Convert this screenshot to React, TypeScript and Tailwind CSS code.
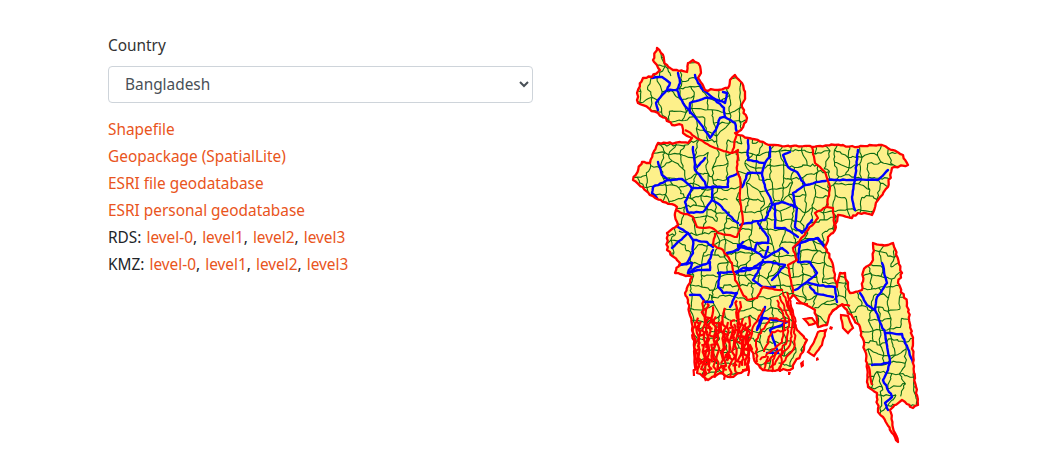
type Pt = [number, number];

function rnd(seed: number) {
  const s = Math.sin(seed * 127.1 + 311.7) * 43758.5453;
  return s - Math.floor(s);
}

// breaks each segment into short crooked pieces, boundaries are never straight
function crooked(pts: Pt[], amp: number, step: number, seed: number, close = false) {
  const list = close ? [...pts, pts[0]] : pts;
  let d = `M${list[0][0]} ${list[0][1]}`;
  let n = seed;
  for (let i = 1; i < list.length; i++) {
    const [ax, ay] = list[i - 1];
    const [bx, by] = list[i];
    const parts = Math.max(1, Math.round(Math.hypot(bx - ax, by - ay) / step));
    for (let k = 1; k <= parts; k++) {
      const t = k / parts;
      const last = k === parts;
      const jx = last ? 0 : (rnd(n++) - 0.5) * amp * 2;
      const jy = last ? 0 : (rnd(n++) - 0.5) * amp * 2;
      d += `L${(ax + (bx - ax) * t + jx).toFixed(1)} ${(ay + (by - ay) * t + jy).toFixed(1)}`;
    }
  }
  return close ? d + "Z" : d;
}

const outline: Pt[] = [
  [657, 48], [661, 53], [664, 60], [667, 65], [673, 70], [687, 72], [688, 63], [693, 60], [700, 66], [701, 73],
  [698, 78], [705, 90], [718, 90], [728, 88], [730, 80], [735, 75], [742, 83], [745, 95], [742, 107], [747, 118],
  [741, 130], [735, 133], [748, 138], [772, 145], [812, 147], [835, 145], [858, 147], [882, 145], [903, 155],
  [908, 165], [892, 168], [888, 187], [878, 200], [872, 215], [858, 213], [852, 218], [838, 215], [835, 230],
  [828, 237], [825, 247], [833, 265], [837, 287], [840, 273], [845, 273], [850, 293], [862, 290], [863, 272],
  [873, 260], [873, 243], [882, 245], [893, 243], [902, 273], [898, 283], [907, 303], [913, 343], [913, 363],
  [918, 405], [913, 408], [902, 400], [890, 410], [893, 428], [898, 442], [892, 433], [883, 417], [878, 412],
  [877, 393], [868, 387], [867, 363], [860, 327], [847, 310], [842, 305], [833, 310], [827, 325], [818, 327],
  [815, 310], [810, 307], [800, 302], [793, 295], [788, 302], [797, 330], [807, 340], [803, 352], [790, 370],
  [763, 370], [756, 363], [750, 345], [747, 370], [730, 377], [720, 373], [708, 380], [697, 373], [695, 353],
  [692, 330], [688, 300], [685, 293], [692, 277], [675, 273], [680, 263], [667, 250], [667, 233], [678, 225],
  [675, 213], [677, 207], [655, 198], [633, 180], [642, 162], [650, 163], [658, 143], [688, 143], [692, 138],
  [683, 133], [682, 125], [672, 125], [658, 113], [638, 103], [637, 93], [643, 78], [652, 77], [660, 70], [653, 60],
];

const islands: Pt[][] = [
  [[826, 330], [822, 345], [814, 356], [808, 352], [814, 342], [818, 332]],
  [[841, 315], [848, 316], [853, 328], [848, 333], [843, 328]],
  [[804, 319], [812, 318], [816, 323], [809, 325]],
];

const specks: Pt[][] = [
  [[830, 326], [833, 327], [832, 330], [829, 329]],
  [[800, 363], [804, 360], [804, 366], [801, 368]],
  [[788, 372], [791, 372], [790, 375], [788, 375]],
  [[816, 358], [818, 357], [819, 360], [816, 361]],
];

const blue: Pt[][] = [
  [[652, 78], [662, 77], [670, 83], [667, 90], [658, 100], [656, 103], [658, 110]],
  [[667, 90], [677, 90], [680, 83], [678, 73]],
  [[677, 90], [683, 103], [695, 117], [703, 127], [710, 138], [717, 127], [720, 118], [725, 117], [735, 123], [737, 132]],
  [[690, 113], [690, 103], [705, 98], [713, 98], [724, 108], [725, 117]],
  [[695, 75], [698, 83], [703, 90], [713, 98], [725, 103], [727, 93], [723, 92]],
  [[658, 162], [662, 175], [668, 180], [682, 179], [692, 188], [707, 187], [717, 187], [728, 187], [728, 178], [738, 173]],
  [[693, 147], [695, 170], [705, 182], [707, 187]],
  [[705, 158], [697, 167]],
  [[668, 180], [653, 187], [652, 193], [657, 198]],
  [[692, 188], [685, 202], [688, 213], [703, 212], [712, 200], [720, 205], [727, 213], [738, 223]],
  [[712, 200], [712, 187]],
  [[740, 225], [762, 220], [765, 220], [772, 205], [782, 202], [792, 205], [797, 208], [795, 227], [802, 233], [812, 220]],
  [[795, 207], [793, 193], [805, 185], [828, 180], [855, 180], [878, 180], [888, 170]],
  [[805, 185], [797, 172], [788, 167], [783, 155], [790, 152]],
  [[855, 180], [858, 150]],
  [[855, 180], [852, 197], [855, 210]],
  [[748, 140], [748, 160], [765, 163], [770, 157], [770, 147]],
  [[765, 163], [762, 173], [748, 173], [742, 187]],
  [[762, 173], [765, 187], [770, 197], [772, 205]],
  [[758, 223], [768, 237], [768, 243], [757, 243], [755, 250], [738, 247]],
  [[775, 205], [775, 228], [785, 228], [798, 237]],
  [[825, 247], [818, 238], [802, 242], [793, 248]],
  [[678, 227], [688, 233], [693, 240], [693, 253], [687, 263], [680, 265]],
  [[693, 240], [707, 242], [713, 247]],
  [[688, 233], [672, 248]],
  [[738, 245], [750, 248], [765, 258], [782, 248], [788, 253]],
  [[768, 247], [765, 258]],
  [[743, 242], [738, 250], [727, 253]],
  [[713, 250], [708, 263], [697, 267], [688, 273]],
  [[718, 273], [732, 272], [750, 270], [762, 262], [768, 262], [785, 265], [772, 280]],
  [[720, 273], [718, 287], [723, 293], [737, 293], [730, 307]],
  [[690, 295], [700, 295], [705, 302], [713, 302]],
  [[680, 265], [692, 263], [688, 273], [698, 270], [710, 270], [710, 262]],
  [[737, 273], [743, 268], [760, 268], [763, 260]],
  [[760, 268], [753, 280], [763, 287], [775, 287]],
  [[795, 290], [807, 282], [817, 285], [835, 287], [837, 302]],
  [[810, 287], [815, 293], [833, 297]],
  [[807, 282], [817, 273], [810, 262], [798, 262], [800, 243], [817, 238], [825, 247]],
  [[765, 307], [757, 330], [763, 318], [787, 322], [770, 330], [778, 353], [767, 353]],
  [[882, 263], [887, 283], [877, 297], [875, 310], [878, 317], [885, 333], [902, 334], [913, 363]],
  [[860, 293], [867, 305], [875, 310]],
  [[885, 333], [890, 363], [872, 365]],
  [[890, 363], [888, 370], [883, 380], [892, 397], [885, 403], [888, 410]],
];

const red: Pt[][] = [
  [[685, 130], [705, 143], [715, 148], [732, 153], [737, 133]],
  [[732, 153], [738, 150], [737, 170], [740, 178], [740, 200], [743, 222], [737, 237], [718, 233], [712, 228], [697, 227], [693, 217], [675, 210]],
  [[715, 233], [713, 245], [723, 250], [732, 263], [735, 280], [747, 300], [757, 298], [763, 287], [778, 290], [783, 290]],
  [[812, 147], [815, 163], [825, 172], [830, 187], [827, 207], [815, 213], [818, 218], [808, 230], [798, 243], [793, 248], [797, 260], [788, 265], [793, 293]],
  [[827, 207], [833, 208], [835, 230]],
  [[868, 365], [872, 385]],
];

// hand placed coast channels around the middle of the delta
const rings: Pt[][] = [
  [[783, 292], [793, 320], [790, 345], [770, 368]],
  [[780, 296], [789, 320], [786, 344], [764, 364]],
  [[787, 292], [795, 318], [794, 348], [778, 370]],
  [[777, 300], [785, 320], [782, 342], [760, 360]],
  [[764, 308], [752, 330], [748, 345]],
  [[790, 322], [770, 318], [756, 340], [757, 362]],
  [[786, 330], [772, 332], [764, 352]],
  [[775, 352], [772, 372]],
  [[782, 350], [780, 372]],
  [[768, 356], [764, 370]],
  [[796, 303], [808, 304]],
  [[832, 312], [842, 304], [850, 306]],
];

function network() {
  const cell = 11;
  const nodes: Pt[][] = [];
  for (let r = 0; r < 38; r++) {
    const row: Pt[] = [];
    for (let c = 0; c < 28; c++) {
      const id = r * 40 + c;
      row.push([628 + c * cell + (rnd(id) - 0.5) * 9, 44 + r * cell + (rnd(id + 1900) - 0.5) * 9]);
    }
    nodes.push(row);
  }
  let d = "";
  nodes.forEach((row, r) =>
    row.forEach((p, c) => {
      const id = r * 40 + c;
      if (c < 27 && rnd(id + 4000) > 0.2) d += crooked([p, row[c + 1]], 1.2, 3, id + 6000);
      if (r < 37 && rnd(id + 4500) > 0.2) d += crooked([p, nodes[r + 1][c]], 1.2, 3, id + 9000);
    }),
  );
  return d;
}

function deltaChannels() {
  let d = "";
  for (let i = 0; i < 19; i++) {
    const x = 695 + i * 3;
    const top = 300 + rnd(i + 70) * 24;
    const bottom = 358 + rnd(i + 90) * 24;
    d += crooked([[x, top], [x + 3 * (rnd(i + 30) - 0.5), (top + bottom) / 2], [x - 1, bottom]], 2.2, 4, i * 50 + 14000);
  }
  // short crossings between the fingers, no long horizontals
  for (let i = 0; i < 34; i++) {
    const x = 696 + rnd(i + 300) * 48;
    const y = 322 + rnd(i + 400) * 50;
    d += crooked([[x, y], [x + 5, y + (rnd(i + 500) - 0.5) * 6]], 1, 3, i * 30 + 19000);
  }
  return d;
}

const landPath = crooked(outline, 1, 3, 11, true);
const gridPath = network();
const deltaPath = deltaChannels();

function BangladeshMap() {
  return (
    <svg viewBox="625 40 300 410" className="mt-[4px] ml-[92px] h-[410px] w-[300px] shrink-0">
      <defs>
        <clipPath id="land">
          <path d={landPath} />
        </clipPath>
      </defs>
      <path d={landPath} fill="#fdf08a" />
      <path d={gridPath} fill="none" stroke="#0b6a12" strokeWidth="1.1" clipPath="url(#land)" />
      {blue.map((line, i) => (
        <path key={i} d={crooked(line, 0.5, 3, 100 + i * 37)} fill="none" stroke="#0000ff" strokeWidth="2.4" strokeLinejoin="round" strokeLinecap="round" clipPath="url(#land)" />
      ))}
      {red.map((line, i) => (
        <path key={i} d={crooked(line, 0.6, 3, 2000 + i * 41)} fill="none" stroke="#ff0000" strokeWidth="2.2" strokeLinejoin="round" />
      ))}
      <path d={deltaPath} fill="none" stroke="#ff0000" strokeWidth="2.2" strokeLinejoin="round" />
      {rings.map((line, i) => (
        <path key={i} d={crooked(line, 1, 3, 2600 + i * 29)} fill="none" stroke="#ff0000" strokeWidth="2" strokeLinejoin="round" />
      ))}
      {islands.map((shape, i) => (
        <path key={i} d={crooked(shape, 0.5, 3, 3100 + i * 23, true)} fill="#fdf08a" stroke="#ff0000" strokeWidth="2.2" />
      ))}
      {specks.map((shape, i) => (
        <path key={i} d={crooked(shape, 0.5, 3, 3400 + i * 23, true)} fill="#ff0000" />
      ))}
      <path d={landPath} fill="none" stroke="#ff0000" strokeWidth="2.3" strokeLinejoin="round" />
    </svg>
  );
}

function Link({ children }: { children: string }) {
  return <a className="text-[#e95420]">{children}</a>;
}

function LevelRow({ name }: { name: string }) {
  return (
    <div className="h-[27px] [word-spacing:1px]">
      {name}: <Link>level-0</Link>, <Link>level1</Link>, <Link>level2</Link>, <Link>level3</Link>
    </div>
  );
}

export default function App() {
  return (
    <div className="flex h-[465px] items-start bg-white pt-[36px] pl-[108px] font-['Noto_Sans',sans-serif] text-[15.4px] leading-[20px] text-[#212529]">
      <div className="w-[425px] shrink-0">
        <label className="block text-[#333333]">Country</label>
        <select className="mt-[10px] h-[37px] w-full rounded-[4px] border border-[#ced4da] bg-white pl-[12px] text-[#495057]">
          <option>Bangladesh</option>
        </select>
        <div className="mt-[17px]">
          <div className="h-[27px]"><Link>Shapefile</Link></div>
          <div className="h-[27px]"><Link>Geopackage (SpatialLite)</Link></div>
          <div className="h-[27px]"><Link>ESRI file geodatabase</Link></div>
          <div className="h-[27px]"><Link>ESRI personal geodatabase</Link></div>
          <LevelRow name="RDS" />
          <LevelRow name="KMZ" />
        </div>
      </div>
      <BangladeshMap />
    </div>
  );
}
